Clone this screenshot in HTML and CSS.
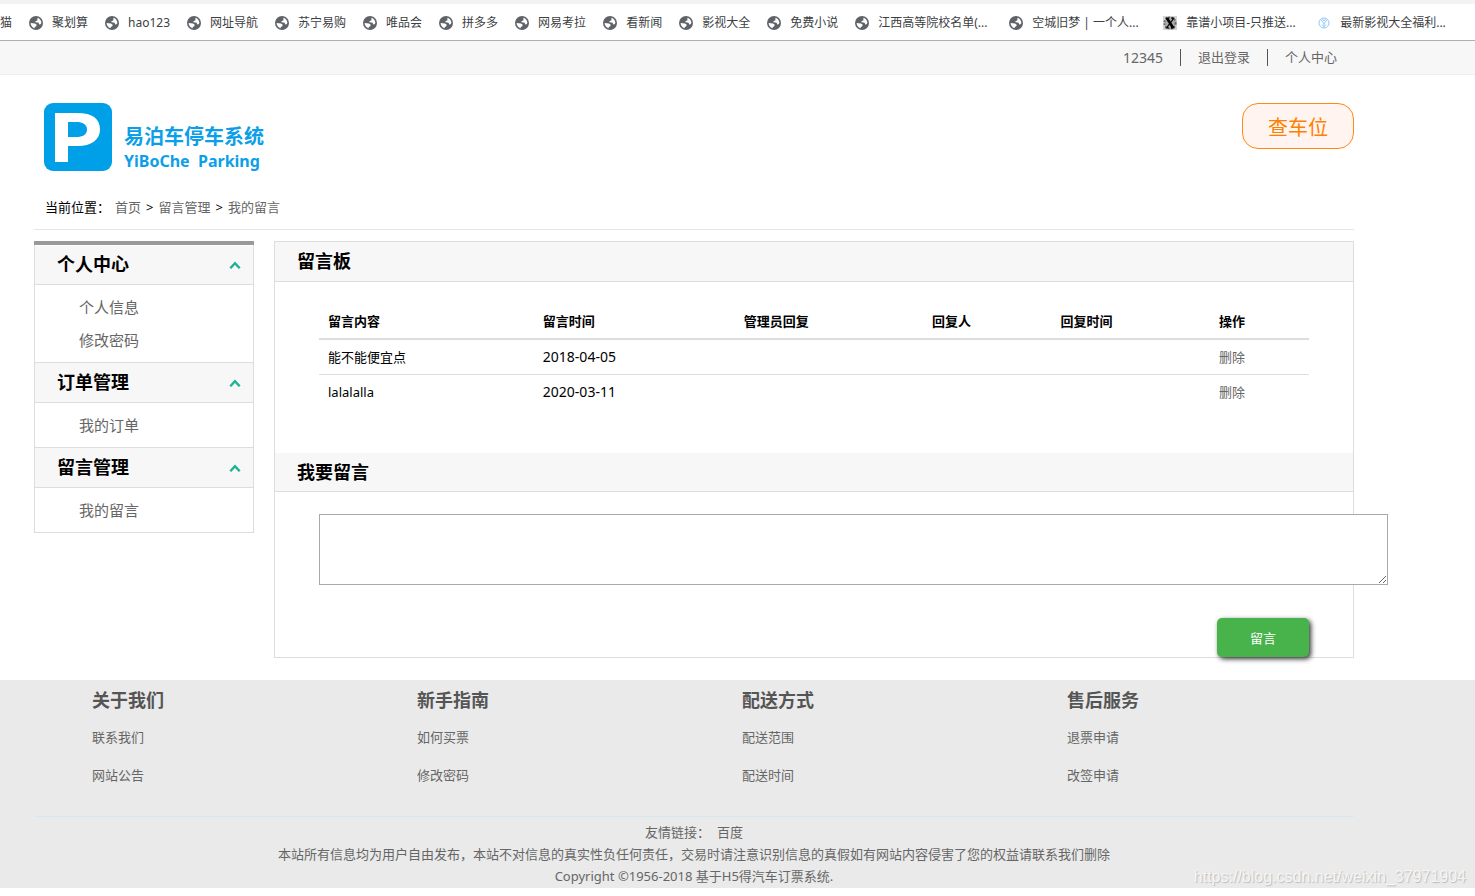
FILE: index.html
```html
<!DOCTYPE html>
<html lang="zh-CN">
<head>
<meta charset="utf-8">
<title>易泊车停车系统</title>
<link rel="stylesheet" href="styles.css">
</head>
<body>
<svg class="defs" aria-hidden="true">
  <symbol id="globe" viewBox="0 0 14 14">
    <circle cx="7" cy="7" r="7" fill="#5f6368"/>
    <path d="M8.500 1.800C10.800 2.600 12.300 4.600 12.400 7L11.500 8.200L10.200 8.400L9.600 6.700L6.700 6.300L6.200 5.200L8.300 4.400Z" fill="#fff"/>
    <path d="M1.600 7L6 7.500L7.700 8.700L7.300 10.300L5.800 11.100L5.600 12.200C3.200 11.500 1.700 9.500 1.600 7Z" fill="#fff"/>
  </symbol>
  <symbol id="chevron" viewBox="0 0 12 8">
    <path d="M1.300 7.200L6 2.200L10.700 7.200" fill="none" stroke="#1ab394" stroke-width="2.400"/>
  </symbol>
</svg>

<nav class="bookmarks" aria-label="书签">
  <a href="#" class="bookmark">猫</a>
  <a href="#" class="bookmark"><svg class="favicon"><use href="#globe"/></svg>聚划算</a>
  <a href="#" class="bookmark"><svg class="favicon"><use href="#globe"/></svg>hao123</a>
  <a href="#" class="bookmark"><svg class="favicon"><use href="#globe"/></svg>网址导航</a>
  <a href="#" class="bookmark"><svg class="favicon"><use href="#globe"/></svg>苏宁易购</a>
  <a href="#" class="bookmark"><svg class="favicon"><use href="#globe"/></svg>唯品会</a>
  <a href="#" class="bookmark"><svg class="favicon"><use href="#globe"/></svg>拼多多</a>
  <a href="#" class="bookmark"><svg class="favicon"><use href="#globe"/></svg>网易考拉</a>
  <a href="#" class="bookmark"><svg class="favicon"><use href="#globe"/></svg>看新闻</a>
  <a href="#" class="bookmark"><svg class="favicon"><use href="#globe"/></svg>影视大全</a>
  <a href="#" class="bookmark"><svg class="favicon"><use href="#globe"/></svg>免费小说</a>
  <a href="#" class="bookmark bookmark-long"><svg class="favicon"><use href="#globe"/></svg>江西高等院校名单(...</a>
  <a href="#" class="bookmark bookmark-long"><svg class="favicon"><use href="#globe"/></svg>空城旧梦 | 一个人...</a>
  <a href="#" class="bookmark bookmark-long"><svg class="favicon" viewBox="0 0 16 16"><rect width="16" height="16" fill="#d4d4d4"/><circle cx="8" cy="8" r="6.500" fill="#aaa" stroke="#666" stroke-width="2" stroke-dasharray="2 1.500"/><path d="M3 2.500h4M9.500 2.500H13M3 13.500h3.500M9 13.500h4M12 3L4.500 13" stroke="#000" stroke-width="1.300"/><path d="M4.500 2.500L11.500 13.500" stroke="#000" stroke-width="3"/></svg>靠谱小项目-只推送...</a>
  <a href="#" class="bookmark bookmark-long"><svg class="favicon" viewBox="0 0 14 14" fill="none" stroke="#8fc9fb"><circle cx="7" cy="7" r="5"/><path d="M3.500 3.500L7 7.500L10.500 3.500M5 2.500L7 5L9 2.500M7 7V11.500M5 8.500L7 10.500L9 8.500"/></svg>最新影视大全福利...</a>
</nav>

<div class="topbar">
  <ul class="account">
    <li><a href="#" class="num">12345</a></li>
    <li><a href="#">退出登录</a></li>
    <li><a href="#">个人中心</a></li>
  </ul>
</div>

<header class="header page">
  <a href="#" class="logo">
    <svg class="logo-mark" viewBox="0 0 68 68" aria-hidden="true">
      <rect width="68" height="68" rx="9" fill="#00a0e9"/>
      <path d="M11 10H33C49 10 56 16 56 26.500C56 37 47 43 34 43H24V59H11ZM24 19V34H32C39 34 43 31.500 43 26.500C43 21.500 39 19 32 19Z" fill="#fff" fill-rule="evenodd"/>
    </svg>
    <span class="logo-text">
      <strong class="logo-name">易泊车停车系统</strong>
      <strong class="logo-latin">YiBoChe&nbsp; Parking</strong>
    </span>
  </a>
  <button type="button" class="find">查车位</button>
</header>

<nav class="crumbs page" aria-label="当前位置">
  <span>当前位置：</span>
  <a href="#">首页</a>
  <span>&gt;</span>
  <a href="#">留言管理</a>
  <span>&gt;</span>
  <a href="#">我的留言</a>
</nav>

<div class="layout page">
  <aside class="sidebar">
    <div class="menu">
      <h3 class="menu-title">个人中心<svg class="chevron"><use href="#chevron"/></svg></h3>
      <ul class="menu-list">
        <li><a href="#">个人信息</a></li>
        <li><a href="#">修改密码</a></li>
      </ul>
      <h3 class="menu-title">订单管理<svg class="chevron"><use href="#chevron"/></svg></h3>
      <ul class="menu-list">
        <li><a href="#">我的订单</a></li>
      </ul>
      <h3 class="menu-title">留言管理<svg class="chevron"><use href="#chevron"/></svg></h3>
      <ul class="menu-list">
        <li><a href="#">我的留言</a></li>
      </ul>
    </div>
  </aside>

  <main class="panel">
    <h3 class="panel-title">留言板</h3>
    <div class="board">
      <table class="messages">
        <thead>
          <tr>
            <th class="col-content">留言内容</th>
            <th class="col-date">留言时间</th>
            <th class="col-reply">管理员回复</th>
            <th class="col-person">回复人</th>
            <th class="col-replied">回复时间</th>
            <th class="col-action">操作</th>
          </tr>
        </thead>
        <tbody>
          <tr>
            <td>能不能便宜点</td>
            <td class="num">2018-04-05</td>
            <td></td><td></td><td></td>
            <td><a href="#">删除</a></td>
          </tr>
          <tr>
            <td>lalalalla</td>
            <td class="num">2020-03-11</td>
            <td></td><td></td><td></td>
            <td><a href="#">删除</a></td>
          </tr>
        </tbody>
      </table>
    </div>
    <h3 class="panel-title" id="write-title">我要留言</h3>
    <form class="write">
      <textarea class="write-text" aria-labelledby="write-title"></textarea>
      <button type="button" class="send">留言</button>
    </form>
  </main>
</div>

<footer class="footer">
  <div class="page">
    <div class="foot-cols">
      <section class="foot-col">
        <h3>关于我们</h3>
        <a href="#">联系我们</a>
        <a href="#">网站公告</a>
      </section>
      <section class="foot-col">
        <h3>新手指南</h3>
        <a href="#">如何买票</a>
        <a href="#">修改密码</a>
      </section>
      <section class="foot-col">
        <h3>配送方式</h3>
        <a href="#">配送范围</a>
        <a href="#">配送时间</a>
      </section>
      <section class="foot-col">
        <h3>售后服务</h3>
        <a href="#">退票申请</a>
        <a href="#">改签申请</a>
      </section>
    </div>
    <div class="legal">
      <p>友情链接：&nbsp; <a href="#">百度</a></p>
      <p>本站所有信息均为用户自由发布，本站不对信息的真实性负任何责任，交易时请注意识别信息的真假如有网站内容侵害了您的权益请联系我们删除</p>
      <p>Copyright ©1956-2018 基于H5得汽车订票系统.</p>
    </div>
  </div>
  <span class="watermark">https://blog.csdn.net/weixin_37971904</span>
</footer>
</body>
</html>
```
FILE: styles.css
```css
* {
  box-sizing: border-box;
}

body {
  margin: 0;
  background: #fff;
  color: #000;
  font-family: "Noto Sans", "Noto Sans CJK SC", sans-serif;
  font-size: 13px;
  line-height: 22px;
}

h3, p, ul {
  margin: 0;
  padding: 0;
}

ul {
  list-style: none;
}

a {
  color: #666;
  text-decoration: none;
}

button, textarea {
  font-family: inherit;
}

.defs {
  display: none;
}

.num {
  font-size: 14px;
}

.page {
  width: calc(100% - 68px);
  max-width: 1320px;
  margin-left: 34px;
}

/* Bookmarks */
.bookmarks {
  display: flex;
  gap: 17px;
  height: 41px;
  padding-top: 1px;
  overflow: hidden;
  border-top: 4px solid #f1f3f4;
  border-bottom: 1px solid #b0b0b0;
}

.bookmark {
  display: flex;
  flex: none;
  align-items: center;
  gap: 9px;
  color: #3c4043;
  font-size: 12px;
  white-space: nowrap;
}

.bookmark-long {
  width: 137px;
}

.favicon {
  flex: none;
  width: 14px;
  height: 14px;
}

/* Account bar */
.topbar {
  background: #f7f7f7;
  border-bottom: 1px solid #eee;
}

.account {
  display: flex;
  justify-content: flex-end;
  align-items: center;
  width: calc(100% - 34px);
  max-width: 1354px;
  height: 33px;
}

.account li {
  padding: 0 17px;
  line-height: 17px;
}

.account li + li {
  border-left: 1px solid #555;
}

/* Header */
.header {
  display: flex;
  justify-content: space-between;
  align-items: flex-start;
  padding: 28px 0 15px 10px;
}

.logo {
  display: flex;
  gap: 12px;
  height: 70px;
  color: #0c9fe8;
}

.logo-mark {
  width: 68px;
  height: 68px;
}

.logo-text {
  display: flex;
  flex-direction: column;
  padding-top: 22px;
}

.logo-name {
  font-size: 20px;
  line-height: 24px;
}

.logo-latin {
  font-size: 16px;
  line-height: 24px;
}

.find {
  width: 112px;
  height: 46px;
  padding: 0;
  border: 1px solid #ff8a14;
  border-radius: 16px;
  background: #fff4ef;
  color: #ff7f00;
  font-size: 20px;
}

.crumbs {
  display: flex;
  flex-wrap: wrap;
  gap: 5px;
  padding: 8px 11px 11px;
  border-bottom: 1px solid #e6e6e6;
}

/* Columns */
.layout {
  display: flex;
  align-items: flex-start;
  gap: 20px;
  padding: 11px 0 22px;
}

.sidebar {
  flex: none;
  width: 220px;
  border-top: 4px solid #999;
}

.menu {
  border: 1px solid #ddd;
  border-top: 0;
}

.menu-title {
  display: flex;
  justify-content: space-between;
  align-items: center;
  padding: 0 12px 0 22px;
  background: #f7f7f7;
  border-bottom: 1px solid #ddd;
  font-size: 18px;
  line-height: 39px;
}

.menu-title:first-child {
  box-shadow: inset 0 1px #fff;
}

.chevron {
  width: 12px;
  height: 8px;
}

.menu-list {
  padding: 6px 0 5px 44px;
  font-size: 15px;
  line-height: 33px;
}

.menu-list + .menu-title {
  border-top: 1px solid #ddd;
}

.panel {
  flex: 1;
  min-width: 0;
  border: 1px solid #ddd;
}

.panel-title {
  padding: 0 22px;
  background: #f7f7f7;
  border-bottom: 1px solid #ddd;
  font-size: 18px;
  line-height: 39px;
}

.board {
  padding: 22px 44px 44px;
}

.board + .panel-title {
  line-height: 38px;
}

.messages {
  width: 100%;
  border-collapse: collapse;
  table-layout: fixed;
  text-align: left;
}

.messages th {
  padding: 6px 9px;
  border-bottom: 2px solid #ddd;
}

.messages td {
  padding: 6px 9px;
  border-bottom: 1px solid #ddd;
}

.messages tbody tr:last-child td {
  border-bottom: 0;
}

.col-content { width: 21.7%; }
.col-date { width: 20.3%; }
.col-reply { width: 19%; }
.col-person { width: 13%; }
.col-replied { width: 16%; }
.col-action { width: 10%; }

.write {
  display: flex;
  flex-direction: column;
  padding: 22px 44px 0;
}

.write-text {
  flex: none;
  width: 108%;
  height: 71px;
  margin: 0;
  border: 1px solid #a9a9a9;
  background: #fff;
  resize: both;
}

.send {
  align-self: flex-end;
  width: 92px;
  height: 39px;
  margin-top: 33px;
  border: 0;
  border-radius: 5px;
  background: #47b34a;
  box-shadow: 2px 2px 5px #333;
  color: #fff;
  font-size: 13px;
}

/* Footer */
.footer {
  position: relative;
  background: #eaeaea;
  color: #666;
}

.foot-cols {
  display: grid;
  grid-template-columns: repeat(4, 1fr);
  padding: 2px 0 22px 20px;
  border-bottom: 1px solid #d6e9f3;
}

.foot-col {
  display: flex;
  flex-direction: column;
  padding-left: 38px;
  line-height: 38px;
}

.foot-col h3 {
  color: #555;
  font-size: 18px;
  line-height: 36px;
}

.legal {
  padding: 4px 0 1px;
  text-align: center;
}

.watermark {
  position: absolute;
  right: 9px;
  bottom: 0;
  color: #f5f5f5;
  font-family: "Liberation Sans", sans-serif;
  font-size: 16px;
  text-shadow: 1px 1px 1px #bbb;
}
```
